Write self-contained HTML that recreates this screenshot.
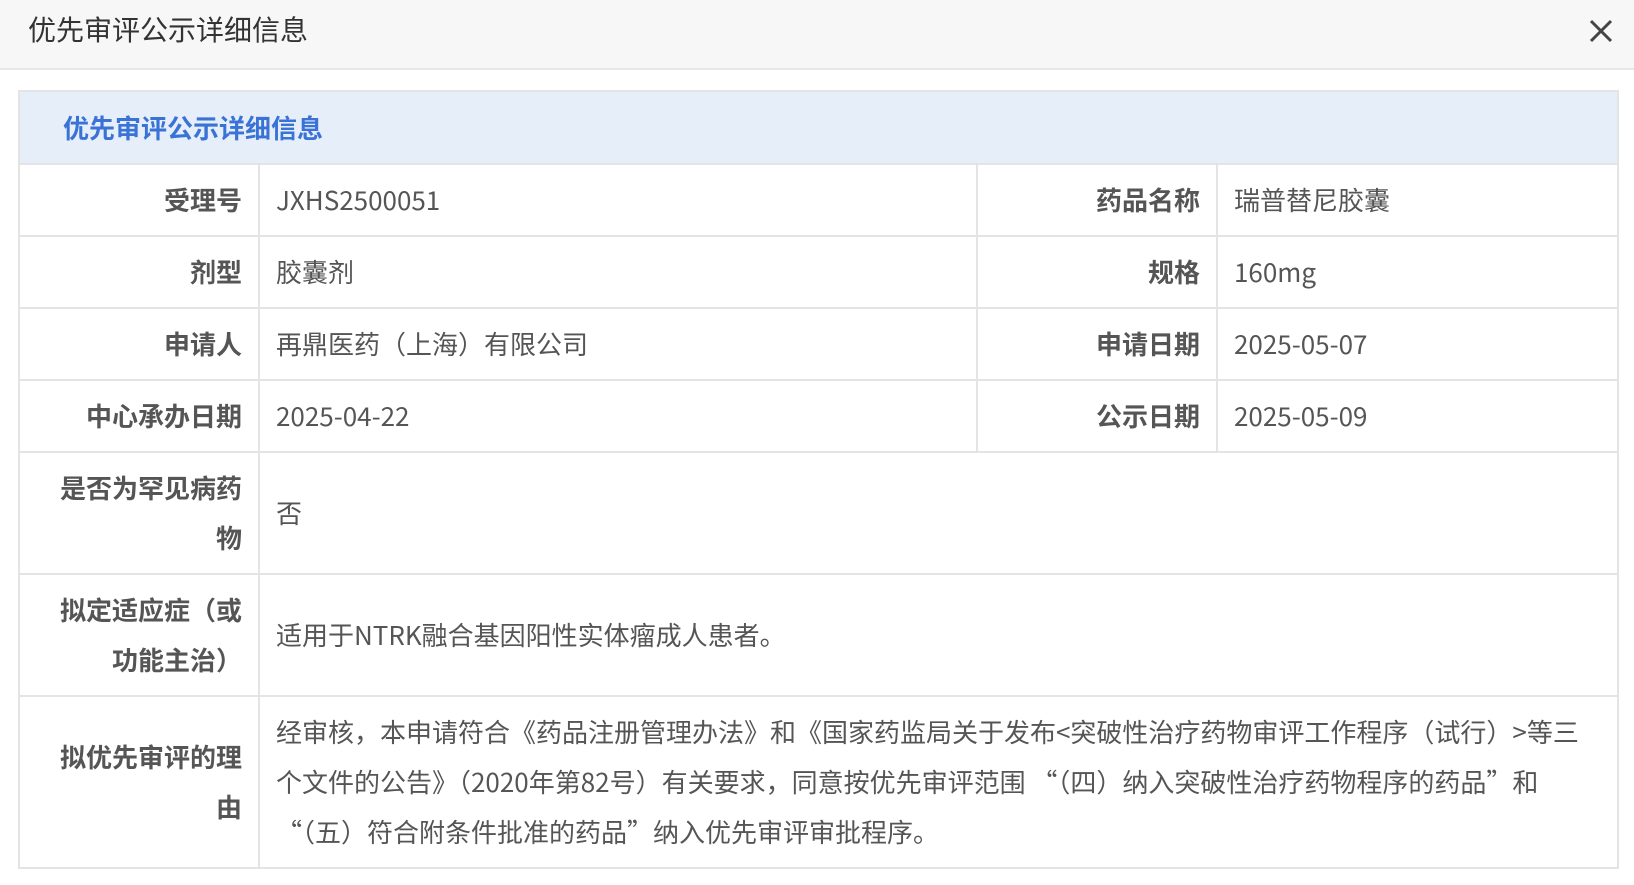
<!DOCTYPE html>
<html><head><meta charset="utf-8"><style>
*{margin:0;padding:0;box-sizing:border-box}
body{width:1634px;height:885px;background:#fff;font-family:"Noto Sans CJK SC","Liberation Sans",sans-serif;position:relative;overflow:hidden}
.hd{position:absolute;left:0;top:0;width:1634px;height:70px;background:#f7f7f7;border-bottom:2px solid #e8e8e8}
.hd .t{position:absolute;left:28px;top:11px;font-size:28px;color:#333;line-height:36px}
.x{position:absolute;left:1587px;top:17px;width:28px;height:28px}
table{position:absolute;left:18px;top:90px;border-collapse:collapse;width:1599px;table-layout:fixed}
td{border:2px solid #e4e4e4;font-size:26px;color:#555;line-height:50px;padding:0 22px 0 16px}
td.l{text-align:right;font-weight:bold;color:#555;padding:0 16px 0 34px}
td.cap{background:#e6eef9;color:#3a73d6;font-weight:bold;font-size:26px;padding-left:43px;height:73px}
tr.r td{height:72px}
.nw{white-space:nowrap;display:block}
</style></head><body>
<div class="hd"><div class="t">优先审评公示详细信息</div>
<svg class="x" viewBox="0 0 28 28"><path d="M4 4L24 24M24 4L4 24" stroke="#444" stroke-width="3"/></svg></div>
<table>
<colgroup><col style="width:240px"><col style="width:718px"><col style="width:240px"><col style="width:401px"></colgroup>
<tr><td class="cap" colspan="4">优先审评公示详细信息</td></tr>
<tr class="r"><td class="l">受理号</td><td>JXHS2500051</td><td class="l">药品名称</td><td>瑞普替尼胶囊</td></tr>
<tr class="r"><td class="l">剂型</td><td>胶囊剂</td><td class="l">规格</td><td>160mg</td></tr>
<tr class="r"><td class="l">申请人</td><td>再鼎医药（上海）有限公司</td><td class="l">申请日期</td><td>2025-05-07</td></tr>
<tr class="r"><td class="l">中心承办日期</td><td>2025-04-22</td><td class="l">公示日期</td><td>2025-05-09</td></tr>
<tr><td class="l" style="height:122px">是否为罕见病药物</td><td colspan="3">否</td></tr>
<tr><td class="l" style="height:122px">拟定适应症（或功能主治）</td><td colspan="3">适用于NTRK融合基因阳性实体瘤成人患者。</td></tr>
<tr><td class="l" style="height:172px">拟优先审评的理由</td><td colspan="3"><span class="nw">经审核，本申请符合《药品注册管理办法》和《国家药监局关于发布&lt;突破性治疗药物审评工作程序（试行）&gt;等三</span><span class="nw">个文件的公告》（2020年第82号）有关要求，同意按优先审评范围 “（四）纳入突破性治疗药物程序的药品”和</span><span class="nw">“（五）符合附条件批准的药品”纳入优先审评审批程序。</span></td></tr>
</table>
</body></html>
